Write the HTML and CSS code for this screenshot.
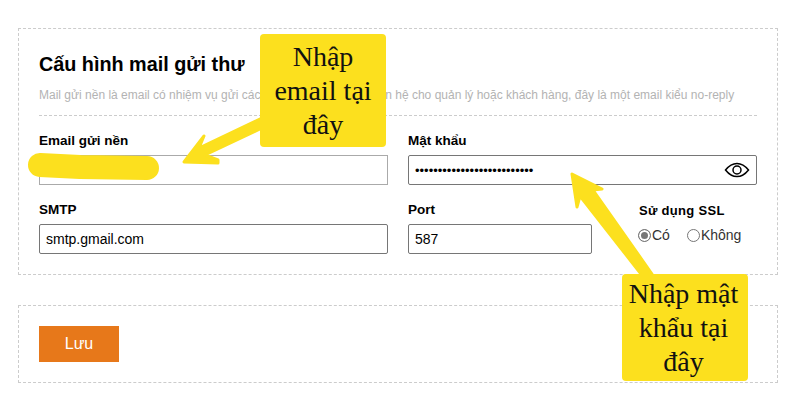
FILE: index.html
```html
<!DOCTYPE html>
<html lang="vi">
<head>
<meta charset="utf-8">
<title>Cấu hình mail gửi thư</title>
<link rel="stylesheet" href="styles.css">
</head>
<body>
<main class="page">
  <section class="card card-form">
    <h1 class="title">Cấu hình mail gửi thư</h1>
    <p class="desc">Mail gửi nền là email có nhiệm vụ gửi các thông báo, thông tin liên hệ cho quản lý hoặc khách hàng, đây là một email kiểu no-reply</p>
    <div class="row">
      <div class="field">
        <label class="label">Email gửi nền</label>
        <input class="input input-light" type="text">
      </div>
      <div class="field">
        <label class="label">Mật khẩu</label>
        <div class="pass-wrap">
          <input class="input input-pass" type="password" value="12345678901234567890123456">
          <svg class="eye" viewBox="0 0 26 16" width="26" height="16" fill="none" stroke="#000" stroke-width="1.5">
            <path d="M1.500 8C5 3.600 8.800 1.400 13 1.400S21 3.600 24.500 8C21 12.400 17.200 14.600 13 14.600S5 12.400 1.500 8Z"/>
            <circle cx="13" cy="8" r="4"/>
          </svg>
        </div>
      </div>
    </div>
    <div class="row">
      <div class="field">
        <label class="label">SMTP</label>
        <input class="input" type="text" value="smtp.gmail.com">
      </div>
      <div class="field-pair">
        <div class="field field-port">
          <label class="label">Port</label>
          <input class="input" type="text" value="587">
        </div>
        <div class="ssl">
          <div class="label label-ssl">Sử dụng SSL</div>
          <div class="radios">
            <label class="radio"><span class="dot dot-on"></span>Có</label>
            <label class="radio"><span class="dot"></span>Không</label>
          </div>
        </div>
      </div>
    </div>
  </section>
  <section class="card card-save">
    <button class="save" type="button">Lưu</button>
  </section>
</main>

<svg class="marks" viewBox="0 0 788 401" width="788" height="401">
  <path class="blob" d="M40 165L80 167L147 168"/>
  <path class="arrow" d="M184 162L204 136L199 148L262 118L262 128L205 155L218 160L218 163Z"/>
  <path class="arrow" d="M572 174L602 189L593 190L652 274L641 274L580 196L577 207Z"/>
</svg>
<div class="note note-email">Nhập<br>email tại<br>đây</div>
<div class="note note-pass">Nhập mật<br>khẩu tại<br>đây</div>
</body>
</html>
```
FILE: styles.css
```css
* { box-sizing: border-box; }
html, body { margin: 0; padding: 0; background: #fff; }
body {
  position: relative;
  width: 788px;
  height: 401px;
  overflow: hidden;
  font-family: "Liberation Sans", Arial, sans-serif;
  color: #000;
}
.page { padding: 28px 10px 0 18px; }
.card { border: 1px dashed #ccc; }
.card-form { height: 247px; padding: 20px 20px 0; }
.card-save { height: 78px; margin-top: 30px; padding: 20px; }
.title {
  margin: 0;
  font-size: 19.8px;
  line-height: 30px;
  font-weight: 700;
}
.desc {
  margin: 9px 0 0;
  padding-bottom: 12px;
  font-size: 12px;
  line-height: 15px;
  color: #b3b3b3;
  border-bottom: 1px dashed #ccc;
  white-space: nowrap;
}
.row {
  display: grid;
  grid-template-columns: 349px 349px;
  column-gap: 20px;
  margin-top: 17px;
}
.field { display: flex; flex-direction: column; }
.label {
  font-size: 13.5px;
  line-height: 16px;
  font-weight: 700;
  margin-bottom: 6px;
}
.input {
  display: block;
  width: 100%;
  height: 30px;
  padding: 0 6px;
  border: 1px solid #767676;
  border-radius: 2px;
  background: #fff;
  font-family: "Liberation Sans", Arial, sans-serif;
  font-size: 14px;
  color: #000;
}
.input-light { border-color: #aaa; border-radius: 0; }
.input-pass { font-size: 13px; }
.pass-wrap { position: relative; }
.eye { position: absolute; right: 7px; top: 7px; }
.field-pair { display: flex; }
.field-port { width: 184px; flex: none; }
.ssl { margin-left: 47px; padding-top: 1px; }
.label-ssl { font-size: 13px; letter-spacing: 0.3px; margin-bottom: 8px; white-space: nowrap; }
.radios { display: flex; gap: 17px; margin-left: -1px; }
.radio { display: flex; align-items: center; font-size: 14px; line-height: 16px; color: #333; }
.dot {
  display: block;
  width: 13px;
  height: 13px;
  margin-right: 1px;
  border: 1px solid #767676;
  border-radius: 50%;
  background: #fff;
}
.dot-on { background: #777; box-shadow: inset 0 0 0 2px #fff; }
.save {
  display: block;
  width: 80px;
  height: 36px;
  border: 0;
  padding: 0;
  background: #e7781a;
  color: #fff;
  font-family: "Liberation Sans", Arial, sans-serif;
  font-size: 16px;
}
.marks { position: absolute; left: 0; top: 0; }
.blob { fill: none; stroke: #fce01e; stroke-width: 24px; stroke-linecap: round; stroke-linejoin: round; }
.arrow { fill: #fce01e; stroke: #fce01e; stroke-width: 3px; stroke-linejoin: round; }
.note {
  position: absolute;
  display: flex;
  align-items: center;
  justify-content: center;
  background: #fce01e;
  border-radius: 4px;
  font-family: "Liberation Serif", "Times New Roman", serif;
  font-size: 28px;
  line-height: 34px;
  text-align: center;
  color: #111;
}
.note-email { left: 260px; top: 34px; width: 126px; height: 113px; }
.note-pass { left: 622px; top: 274px; width: 126px; height: 107px; padding-right: 3px; }
```
